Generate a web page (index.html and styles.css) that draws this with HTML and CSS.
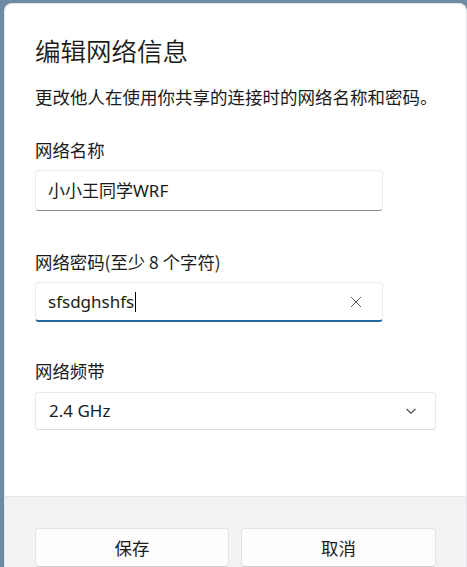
FILE: index.html
```html
<!DOCTYPE html>
<html lang="zh-CN">
<head>
<meta charset="utf-8">
<title>编辑网络信息</title>
<link rel="stylesheet" href="styles.css">
</head>
<body>
<div class="dialog">
  <div class="content">
    <h1 class="title">编辑网络信息</h1>
    <p class="subtitle">更改他人在使用你共享的连接时的网络名称和密码。</p>

    <div class="field field-name">
      <div class="label">网络名称</div>
      <div class="input">
        <span class="value">小小王同学WRF</span>
      </div>
    </div>

    <div class="field field-pass">
      <div class="label">网络密码(至少 8 个字符)</div>
      <div class="input input-focus">
        <span class="value">sfsdghshfs<span class="caret"></span></span>
        <svg class="clear" width="12" height="12" viewBox="0 0 12 12" aria-hidden="true">
          <path d="M1 1 L11 11 M11 1 L1 11" stroke="#5c5c5c" stroke-width="1" fill="none"/>
        </svg>
      </div>
    </div>

    <div class="field field-band">
      <div class="label">网络频带</div>
      <div class="select">
        <span class="value">2.4 GHz</span>
        <svg class="chevron" width="12" height="8" viewBox="0 0 12 8" aria-hidden="true">
          <path d="M1.5 2 L6 6.2 L10.5 2" stroke="#4a4a4a" stroke-width="1.1" fill="none"/>
        </svg>
      </div>
    </div>
  </div>
  <div class="footer">
    <button class="btn">保存</button>
    <button class="btn">取消</button>
  </div>
</div>
</body>
</html>
```
FILE: styles.css
```css
html, body {
  margin: 0;
  padding: 0;
}
body {
  width: 467px;
  height: 567px;
  overflow: hidden;
  background: #6f8aa4;
  font-family: "Noto Sans", "Noto Sans CJK SC", sans-serif;
  color: #1b1b1b;
}
.dialog {
  margin: 3px 0 0 4px;
  width: 463px;
  height: 570px;
  background: #ffffff;
  border-radius: 8px 8px 0 0;
  box-sizing: border-box;
  border-left: 1px solid #e4e6e9;
  border-top: 1px solid #e4e6e9;
  border-right: 1px solid #e4e6e9;
  display: flex;
  flex-direction: column;
  overflow: hidden;
}
.content {
  padding: 29px 0 0 30px;
  height: 492px;
  box-sizing: border-box;
}
.title {
  margin: 0;
  font-family: "Noto Sans CJK SC", sans-serif;
  font-weight: 350;
  font-size: 25.5px;
  line-height: 34px;
  height: 34px;
  color: #1a1a1a;
}
.subtitle {
  margin: 18px 0 0;
  font-family: "Noto Sans CJK SC", sans-serif;
  font-size: 17.5px;
  line-height: 24px;
  height: 24px;
  white-space: nowrap;
}
.field {
  display: flex;
  flex-direction: column;
}
.field-name { margin-top: 29px; }
.field-pass { margin-top: 39px; }
.field-band { margin-top: 37px; }
.label {
  font-family: "Noto Sans CJK SC", sans-serif;
  font-size: 17.4px;
  line-height: 24px;
  height: 24px;
  margin-bottom: 8px;
  white-space: nowrap;
}
.field-band .label { margin-bottom: 9px; }
.input, .select {
  box-sizing: border-box;
  height: 41px;
  background: #ffffff;
  border: 1px solid #ececec;
  border-bottom: 1px solid #8c8c8c;
  border-radius: 4px;
  display: flex;
  align-items: center;
  padding: 0 12px;
  font-family: "Noto Sans", "Noto Sans CJK SC", sans-serif;
  font-size: 17px;
  color: #1b1b1b;
  box-shadow: 0 0 2px rgba(0,0,0,0.04);
}
.input { width: 348px; }
.input-focus {
  height: 40px;
  border-bottom: 2px solid #23689c;
  justify-content: space-between;
  padding-right: 20px;
}
.select {
  width: 401px;
  height: 38px;
  border: 1px solid #e8e8e8;
  border-bottom-color: #dcdcdc;
  justify-content: space-between;
  padding-left: 13px;
  padding-right: 18px;
}
.value {
  display: inline-flex;
  align-items: center;
  white-space: nowrap;
  line-height: 22px;
}
.caret {
  display: inline-block;
  width: 1px;
  height: 20px;
  background: #000;
  margin-left: 1px;
}
.clear { display: block; }
.chevron { display: block; }
.footer {
  flex: 1;
  background: #f3f3f3;
  border-top: 1px solid #e6e6e6;
  padding: 31px 0 0 30px;
  display: grid;
  grid-template-columns: 194px 195px;
  column-gap: 12px;
  align-items: start;
}
.btn {
  height: 39px;
  background: #fdfdfd;
  border: 1px solid #e3e3e3;
  border-bottom-color: #cfcfcf;
  border-radius: 4px;
  font-family: "Noto Sans CJK SC", sans-serif;
  font-size: 17.4px;
  color: #1b1b1b;
  padding: 0;
  line-height: 24px;
}
```
